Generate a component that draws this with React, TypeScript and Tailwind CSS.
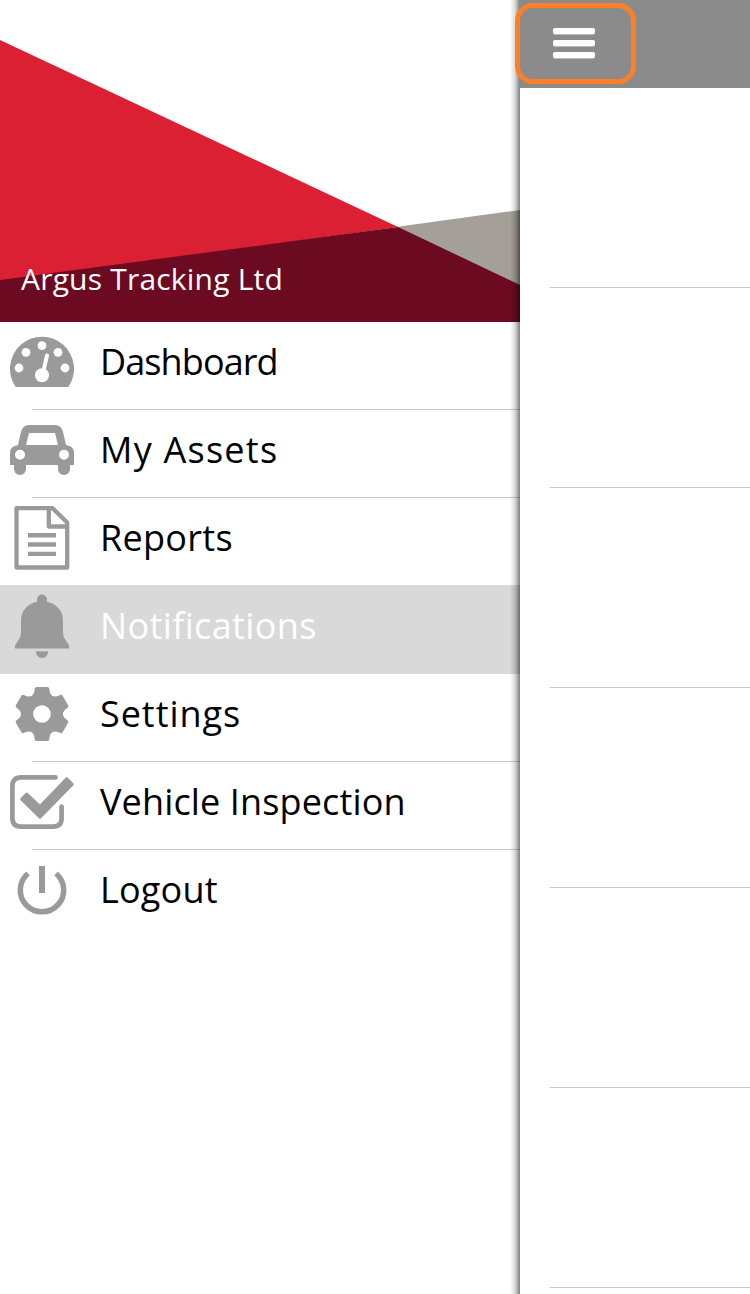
import type { ReactNode } from "react";

type Item = {
  label: string;
  row: string;
  text: string;
  icon: ReactNode;
};

const GearShape = () => (
  <>
    <circle cx="32" cy="32" r="16" fill="none" stroke="currentColor" strokeWidth="9" />
    <circle cx="32" cy="32" r="12" fill="none" stroke="currentColor" strokeWidth="6.4" />
    {[0, 60, 120, 180, 240, 300].map((a) => (
      <path
        key={a}
        d="M26.500 5h11q1.500 0 1.700 1.500L40 11l3 4H21l3-4 .8-4.500Q25 5 26.500 5z"
        transform={`rotate(${a} 32 32)`}
      />
    ))}
  </>
);

const items: Item[] = [
  {
    label: "Dashboard",
    row: "h-[87px] pt-2",
    text: "tracking-[-0.9px]",
    icon: (
      <>
        <path d="M5.700 57A32 32 0 1 1 58.300 57z" />
        <g fill="#fff">
          <circle cx="9" cy="38" r="4.400" />
          <circle cx="16" cy="22.300" r="4.400" />
          <circle cx="32" cy="15.700" r="4.400" />
          <circle cx="48" cy="22.300" r="4.400" />
          <circle cx="55" cy="38" r="4.400" />
          <circle cx="32" cy="45.300" r="7" />
        </g>
        <path d="M32.500 45L37 25.500" stroke="#fff" strokeWidth="4" strokeLinecap="round" />
      </>
    ),
  },
  {
    label: "My Assets",
    row: "h-[88px] border-t pt-2",
    text: "tracking-[1.25px]",
    icon: (
      <path
        fillRule="evenodd"
        d="M8 27l3-13Q12.700 7 19 7h26q6.300 0 8 7l3 13q8 1 8 8v12h-4v4a6 6 0 0 1-12 0v-4H16v4a6 6 0 0 1-12 0v-4H0V35q0-7 8-8zM16 27h32l-3-12H19zM5 36.700a5 5 0 1 0 10 0a5 5 0 1 0-10 0zM49 36.700a5 5 0 1 0 10 0a5 5 0 1 0-10 0z"
      />
    ),
  },
  {
    label: "Reports",
    row: "h-[88px] border-t pt-2",
    text: "tracking-[0.3px]",
    icon: (
      <>
        <path
          fill="none"
          stroke="currentColor"
          strokeWidth="4.300"
          strokeLinejoin="round"
          d="M6.500 2.200H42.500L57.200 16.500V61.500H6.500zM38.800 2.200V20.500H57.200"
        />
        <path d="M18 27h28v4.500H18zM18 36.300h28v4.400H18zM18 45.800h28v4.300H18z" />
      </>
    ),
  },
  {
    label: "Notifications",
    row: "h-[89px] bg-[#d9d9d9] pt-[9px]",
    text: "tracking-[0.37px] text-white",
    icon: (
      <path d="M27 5.500a5 5 0 1 1 10 0v2.300C47 10 53 17 53 27v11q0 5 2.500 8l3.500 5.500v3H5v-3L8.500 46Q11 43 11 38V27C11 17 17 10 27 7.800zM25.700 57.300H38.300Q37.500 64 32 64T25.700 57.300z" />
    ),
  },
  { label: "Settings", row: "h-[87px] pt-2", text: "tracking-[0.95px]", icon: <GearShape /> },
  {
    label: "Vehicle Inspection",
    row: "h-[88px] border-t pt-2",
    text: "tracking-[0.14px]",
    icon: (
      <>
        <path
          fill="none"
          stroke="currentColor"
          strokeWidth="4.700"
          strokeLinecap="round"
          d="M45.500 2.400H11Q2.400 2.400 2.400 11V43Q2.400 51.600 11 51.600H43Q51.600 51.600 51.600 43V31.500"
          transform="translate(0 5)"
        />
        <path
          strokeWidth="3"
          stroke="currentColor"
          strokeLinejoin="round"
          d="M56.700 8.700L62.300 14.300 30 47.300 11.700 29.300 16.700 24 30 36.500z"
        />
      </>
    ),
  },
  {
    label: "Logout",
    row: "h-[88px] border-t pt-2",
    text: "tracking-[0.2px]",
    icon: (
      <>
        <path
          fill="none"
          stroke="currentColor"
          strokeWidth="5.500"
          d="M18 15.500A21.700 21.700 0 1 0 46 15.500"
        />
        <path d="M29 8h6v27h-6z" />
      </>
    ),
  },
];

export default function App() {
  return (
    <div className="relative flex h-[1294px] w-[750px] overflow-hidden bg-white font-['Open_Sans',sans-serif]">
      <aside className="relative w-[520px] shrink-0">
        <header className="relative flex h-[322px] items-end">
          <svg className="absolute inset-0" width="520" height="322" viewBox="0 0 520 322">
            <path fill="#a49f98" d="M396 227L520 210V290z" />
            <path fill="#dc2033" d="M0 40L398 227 0 282z" />
            <path fill="#6b0a20" d="M0 280L398 227 520 285V322H0z" />
          </svg>
          <h1 className="relative mb-[22px] ml-[21px] whitespace-nowrap text-[30px] leading-[42px] tracking-[0.2px] text-white">
            Argus Tracking Ltd
          </h1>
        </header>
        <nav>
          {items.map((item) => (
            <div key={item.label} className={`relative flex border-transparent ${item.row}`}>
              {item.row.includes("border-t") && (
                <span className="absolute -top-px right-0 left-8 h-px bg-[#c8c8c8]" />
              )}
              <svg
                className="ml-2.5 h-16 w-16 shrink-0 fill-current text-[#9a9a9a]"
                viewBox="0 0 64 64"
              >
                {item.icon}
              </svg>
              <span
                className={`ml-[26px] h-16 whitespace-nowrap text-[36px] leading-[63px] ${item.text}`}
              >
                {item.label}
              </span>
            </div>
          ))}
        </nav>
        <div className="absolute inset-y-0 right-0 w-2.5 bg-linear-to-r from-black/0 via-black/15 to-black/50" />
      </aside>
      <main className="flex-1">
        <div className="flex h-[88px] items-start bg-[#8b8b8b] pt-7 pl-[33px]">
          <div className="flex flex-col gap-1.5">
            <i className="block h-1.5 w-[42px] rounded-[2px] bg-white shadow-[0_1px_0_#bbb]" />
            <i className="block h-1.5 w-[42px] rounded-[2px] bg-white shadow-[0_1px_0_#bbb]" />
            <i className="block h-1.5 w-[42px] rounded-[2px] bg-white shadow-[0_1px_0_#bbb]" />
          </div>
        </div>
        <div className="ml-[30px] h-[200px] border-b border-[#c8c8c8]" />
        <div className="ml-[30px] h-[200px] border-b border-[#c8c8c8]" />
        <div className="ml-[30px] h-[200px] border-b border-[#c8c8c8]" />
        <div className="ml-[30px] h-[200px] border-b border-[#c8c8c8]" />
        <div className="ml-[30px] h-[200px] border-b border-[#c8c8c8]" />
        <div className="ml-[30px] h-[200px] border-b border-[#c8c8c8]" />
      </main>
      <div className="absolute top-[3px] left-[515px] h-[81px] w-[121px] rounded-[18px] border-[5px] border-[#ff7f27]" />
    </div>
  );
}
